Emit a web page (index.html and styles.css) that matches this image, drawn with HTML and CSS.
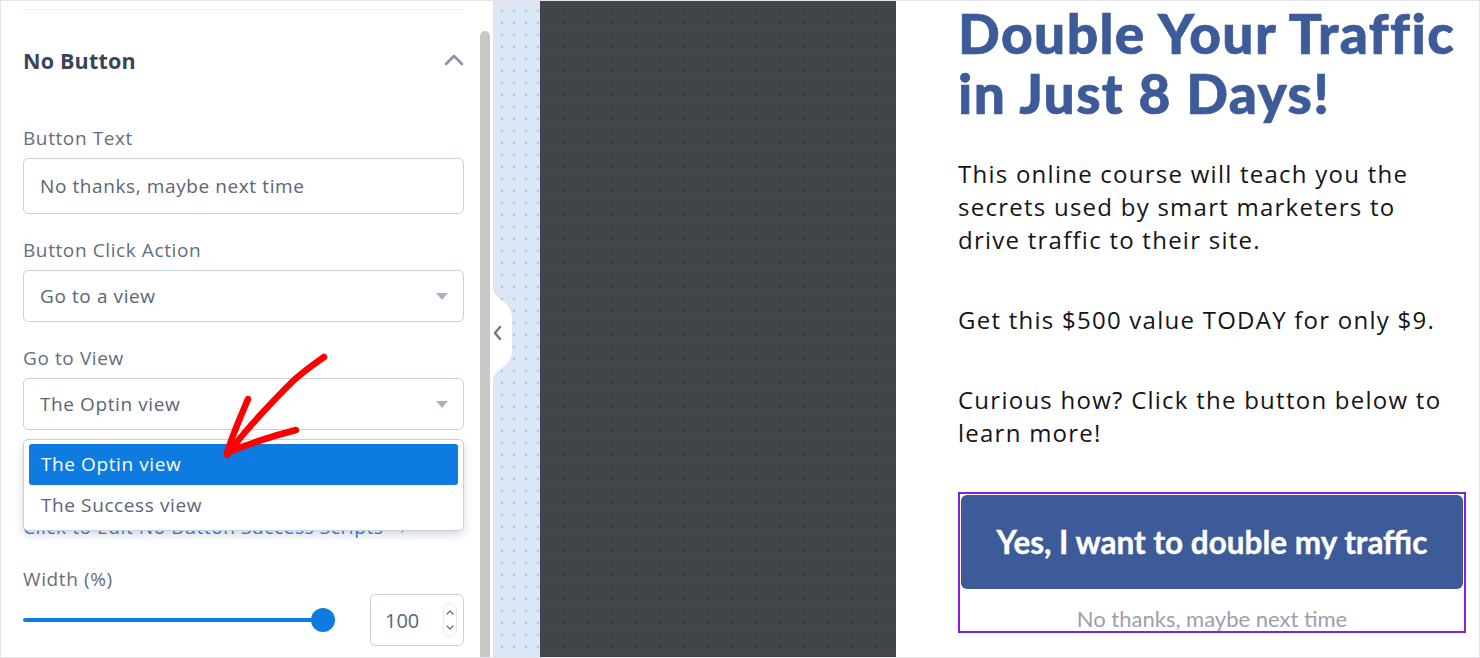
FILE: index.html
```html
<!DOCTYPE html>
<html>
<head>
<meta charset="utf-8">
<link rel="stylesheet" href="styles.css">
</head>
<body>
<div class="app">
  <aside class="panel">
    <div class="panel-inner">
      <div class="divider"></div>
      <div class="section-head">
        <span class="section-title">No Button</span>
        <svg class="chev-up" width="20" height="12" viewBox="0 0 20 12"><polyline points="2,10 10,2 18,10" fill="none" stroke="#8c94a3" stroke-width="2.6" stroke-linecap="round" stroke-linejoin="round"/></svg>
      </div>
      <div class="field">
        <div class="label">Button Text</div>
        <div class="input tall">No thanks, maybe next time</div>
      </div>
      <div class="field">
        <div class="label">Button Click Action</div>
        <div class="input select">Go to a view<span class="caret"></span></div>
      </div>
      <div class="field">
        <div class="label">Go to View</div>
        <div class="input select">The Optin view<span class="caret"></span></div>
      </div>
      <div class="dropdown-anchor">
        <ul class="dropdown">
          <li class="opt active">The Optin view</li>
          <li class="opt">The Success view</li>
        </ul>
      </div>
      <a class="link">Click to Edit No Button Success Scripts →</a>
      <div class="field width-field">
        <div class="label">Width (%)</div>
        <div class="slider-row">
          <div class="slider"><div class="track"></div><div class="thumb"></div></div>
          <div class="num">100<span class="spin"><svg width="10" height="26" viewBox="0 0 10 26"><polyline points="2,7 5,4 8,7" fill="none" stroke="#6b7385" stroke-width="1.3" stroke-linecap="round"/><polyline points="2,19 5,22 8,19" fill="none" stroke="#6b7385" stroke-width="1.3" stroke-linecap="round"/></svg></span></div>
        </div>
      </div>
    </div>
    <div class="scroll"><div class="thumb-bar"></div></div>
  </aside>
  <div class="gutter">
    <svg class="handle" width="22" height="92" viewBox="0 0 22 92"><path d="M0 0 C0 12 19 12 19 30 L19 62 C19 80 0 80 0 92 Z" fill="#ffffff"/><polyline points="7,39 2,45 7,51" fill="none" stroke="#6f7787" stroke-width="2.4" stroke-linecap="round" stroke-linejoin="round"/></svg>
  </div>
  <div class="dark"></div>
  <main class="preview">
    <h1 class="headline">Double Your Traffic in Just 8 Days!</h1>
    <p class="copy">This online course will teach you the secrets used by smart marketers to drive traffic to their site.</p>
    <p class="copy">Get this $500 value TODAY for only $9.</p>
    <p class="copy">Curious how? Click the button below to learn more!</p>
    <div class="cta-box">
      <div class="cta">Yes, I want to double my traffic</div>
      <div class="no-thanks">No thanks, maybe next time</div>
    </div>
  </main>
  <svg class="annot" width="1480" height="658" viewBox="0 0 1480 658">
    <g fill="none" stroke="#ff0000" stroke-width="6.5" stroke-linecap="round" stroke-linejoin="round">
      <path d="M323 356 C 312 364 300 372 290 382 C 268 404 245 428 226 454"/>
      <path d="M247 398 C 240 415 232 432 226 452"/>
      <path d="M295 429 C 275 434 250 442 228 451"/>
    </g>
  </svg>
</div>
</body>
</html>
```
FILE: styles.css
```css
* { box-sizing: border-box; }
html, body { margin: 0; padding: 0; }
body { width: 1480px; height: 658px; overflow: hidden; background: #fff; }

.app {
  position: relative;
  display: flex;
  width: 1480px;
  height: 658px;
  border: 1px solid #e4e5e8;
  overflow: hidden;
}

/* left panel */
.panel {
  display: flex;
  width: 492px;
  flex: none;
  background: #fff;
}
.panel-inner {
  width: 478px;
  padding: 8px 15px 0 22px;
  font-family: "Open Sans", "Noto Sans", sans-serif;
  color: #5d6778;
}
.divider { height: 1px; background: #eceef2; }
.section-head {
  display: flex;
  align-items: center;
  justify-content: space-between;
  height: 26px;
  margin-top: 37px;
}
.section-title {
  font-family: "Open Sans", sans-serif;
  font-weight: 700;
  font-size: 21.5px;
  letter-spacing: 0.2px;
  color: #394456;
}

.field { display: flex; flex-direction: column; }
.label {
  height: 22px;
  line-height: 22px;
  font-size: 19px;
  letter-spacing: 0.6px;
  color: #646e7e;
  margin-bottom: 9px;
}
.section-head + .field { margin-top: 54px; }
.field + .field { margin-top: 25px; }

.input {
  position: relative;
  display: flex;
  align-items: center;
  height: 52px;
  border: 1px solid #c9d1e1;
  border-radius: 5px;
  padding: 0 16px;
  font-size: 19px;
  letter-spacing: 0.6px;
  color: #5b6577;
}
.input.tall { height: 56px; }
.caret {
  position: absolute;
  right: 15px;
  top: 22px;
  width: 0; height: 0;
  border-left: 6px solid transparent;
  border-right: 6px solid transparent;
  border-top: 7px solid #a9b1c6;
}

.dropdown-anchor { position: relative; height: 0; }
.dropdown {
  position: absolute;
  z-index: 5;
  left: 0; right: 0; top: 9px;
  margin: 0;
  list-style: none;
  padding: 4px 5px;
  background: #fff;
  border: 1px solid #c9d1e1;
  border-radius: 5px;
  box-shadow: 0 4px 10px rgba(40, 50, 80, 0.18);
}
.opt {
  height: 41px;
  line-height: 41px;
  padding-left: 12px;
  font-size: 19px;
  letter-spacing: 0.6px;
  color: #5b6577;
  border-radius: 3px;
}
.opt.active { background: #0d7be0; color: #fff; }

.link {
  display: block;
  margin-top: 86px;
  height: 22px;
  line-height: 22px;
  font-size: 19px;
  letter-spacing: 0.6px;
  color: #2f80d8;
}
.width-field { margin-top: 30px; }
.width-field .label { margin-bottom: 4px; }
.slider-row { display: flex; align-items: center; justify-content: space-between; height: 52px; }
.slider { position: relative; width: 312px; height: 24px; display: flex; align-items: center; }
.track { width: 300px; height: 4px; border-radius: 2px; background: #0d7be0; }
.thumb {
  position: absolute; left: 288px; top: 0;
  width: 24px; height: 24px; border-radius: 50%;
  background: #0d7be0;
}
.num {
  position: relative;
  width: 94px; height: 52px;
  border: 1px solid #c9d1e1; border-radius: 5px;
  display: flex; align-items: center;
  padding-left: 14px;
  font-size: 20px; color: #5b6577;
}
.spin {
  position: absolute; right: 6px; top: 8px;
  width: 14px; height: 34px;
  border: 1px solid #e6e9f0; border-radius: 7px;
  display: flex; align-items: center; justify-content: center;
}

.scroll { width: 14px; padding: 30px 3px 0 1px; }
.thumb-bar { width: 10px; height: 100%; background: #c8c8c8; border-radius: 5px 5px 0 0; }

/* gutter */
.gutter {
  position: relative;
  width: 47px;
  flex: none;
  background-color: #dbe7f4;
  background-image: radial-gradient(circle, #a9c7ec 1.1px, transparent 1.6px);
  background-size: 12px 12px;
  background-position: 3px 4px;
}
.handle { position: absolute; left: 0; top: 287px; }

.dark {
  width: 356px;
  flex: none;
  background-color: #42464b;
  background-image: radial-gradient(circle, #363a3f 1.2px, transparent 1.7px);
  background-size: 12px 12px;
  background-position: 6px 4px;
}

/* preview */
.preview {
  flex: 1;
  padding: 0 14px 0 62px;
  background: #fff;
}
.headline {
  margin: 2px 0 0 0;
  font-family: "Lato", sans-serif;
  font-weight: 900;
  font-size: 55px;
  line-height: 60px;
  color: #3d5b98;
  letter-spacing: 1.4px;
  -webkit-text-stroke: 0.7px #3d5b98;
}
.copy {
  margin: 0;
  max-width: 505px;
  font-family: "Open Sans", sans-serif;
  font-size: 24px;
  line-height: 33px;
  letter-spacing: 1.25px;
  color: #151515;
}
.headline + .copy { margin-top: 34px; }
.copy + .copy { margin-top: 47px; }
.cta-box {
  margin-top: 43px;
  border: 2px solid #8222e0;
  padding: 1px;
  width: 508px;
}
.cta {
  height: 94px;
  border-radius: 6px;
  background: #3d5b98;
  color: #fff;
  display: flex; align-items: center; justify-content: center;
  font-family: "Lato", sans-serif;
  font-weight: 700;
  font-size: 31.5px;
  -webkit-text-stroke: 0.4px #fff;
}
.no-thanks {
  text-align: center;
  font-family: "Lato", sans-serif;
  font-size: 22px;
  color: #9ba0ab;
  height: 22px;
  line-height: 22px;
  margin-top: 19px;
}

.annot { position: absolute; left: 0; top: 0; z-index: 10; pointer-events: none; }
```
